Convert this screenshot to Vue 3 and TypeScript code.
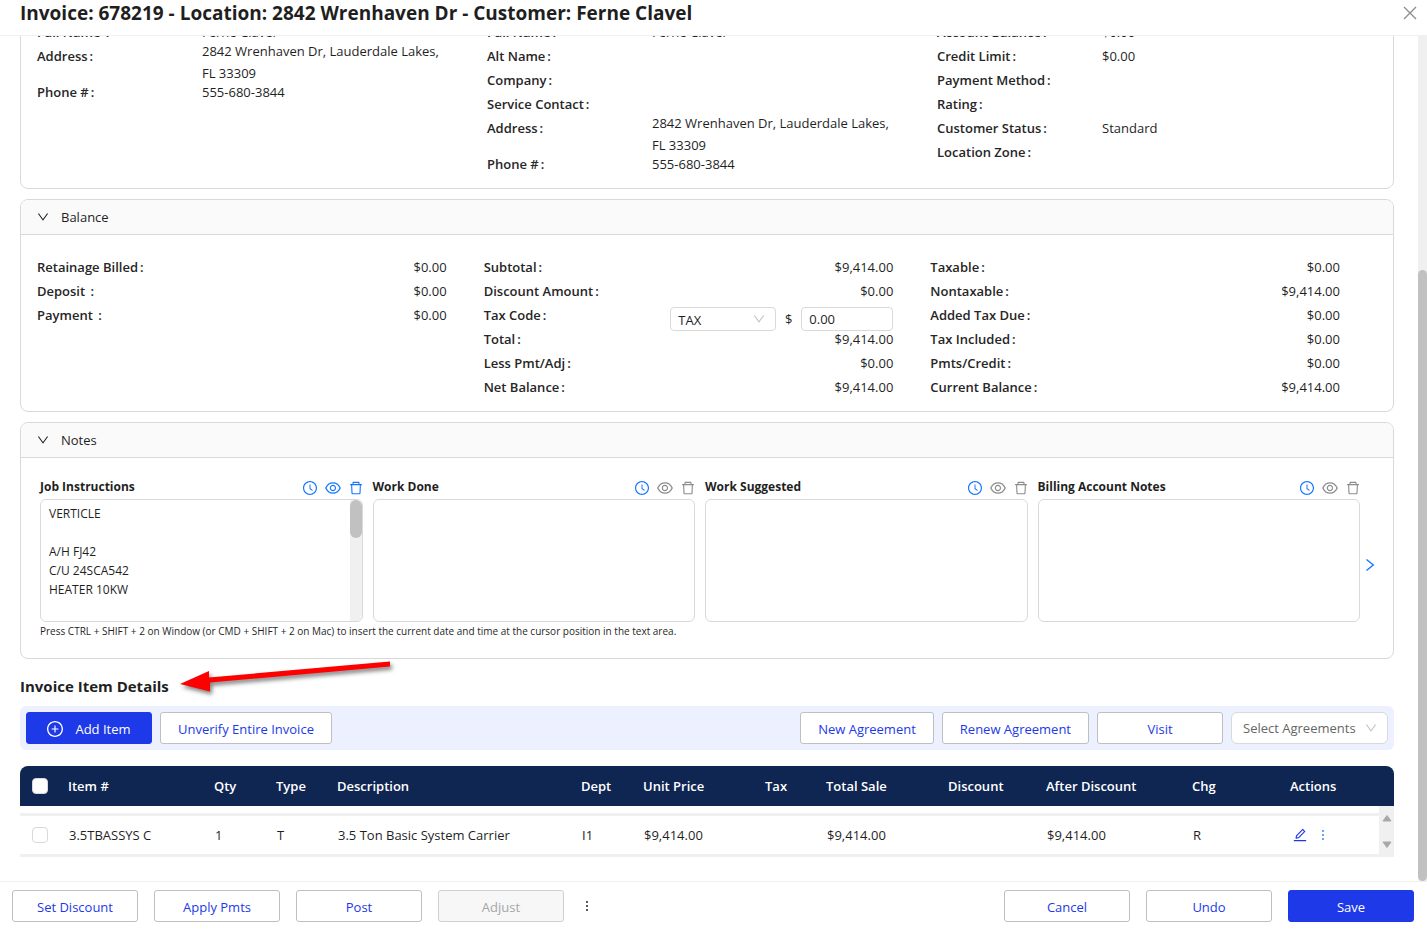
<script setup lang="ts">
import { ref } from 'vue'

interface Field {
  label: string
  value?: string
  tall?: boolean
  tax?: boolean
}

interface Note {
  id: string
  title: string
  text: string
}

const address = '2842 Wrenhaven Dr, Lauderdale Lakes, FL 33309'

const info: Field[][] = [
  [
    { label: 'Full Name ', value: 'Ferne Clavel' },
    { label: 'Address', value: address, tall: true },
    { label: 'Phone #', value: '555-680-3844' },
  ],
  [
    { label: 'Full Name', value: 'Ferne Clavel' },
    { label: 'Alt Name' },
    { label: 'Company' },
    { label: 'Service Contact' },
    { label: 'Address', value: address, tall: true },
    { label: 'Phone #', value: '555-680-3844' },
  ],
  [
    { label: 'Account Balance', value: '$0.00' },
    { label: 'Credit Limit', value: '$0.00' },
    { label: 'Payment Method' },
    { label: 'Rating' },
    { label: 'Customer Status', value: 'Standard' },
    { label: 'Location Zone' },
  ],
]

const balance: Field[][] = [
  [
    { label: 'Retainage Billed', value: '$0.00' },
    { label: 'Deposit ', value: '$0.00' },
    { label: 'Payment ', value: '$0.00' },
  ],
  [
    { label: 'Subtotal', value: '$9,414.00' },
    { label: 'Discount Amount', value: '$0.00' },
    { label: 'Tax Code', tax: true },
    { label: 'Total', value: '$9,414.00' },
    { label: 'Less Pmt/Adj', value: '$0.00' },
    { label: 'Net Balance', value: '$9,414.00' },
  ],
  [
    { label: 'Taxable', value: '$0.00' },
    { label: 'Nontaxable', value: '$9,414.00' },
    { label: 'Added Tax Due', value: '$0.00' },
    { label: 'Tax Included', value: '$0.00' },
    { label: 'Pmts/Credit', value: '$0.00' },
    { label: 'Current Balance', value: '$9,414.00' },
  ],
]

const notes = ref<Note[]>([
  { id: 'job', title: 'Job Instructions', text: 'VERTICLE\n\nA/H FJ42\nC/U 24SCA542\nHEATER 10KW\n' },
  { id: 'done', title: 'Work Done', text: '' },
  { id: 'suggested', title: 'Work Suggested', text: '' },
  { id: 'billing', title: 'Billing Account Notes', text: '' },
])

const taxAmount = ref('0.00')

const columns = [
  { key: 'item', title: 'Item #', value: '3.5TBASSYS C' },
  { key: 'qty', title: 'Qty', value: '1' },
  { key: 'type', title: 'Type', value: 'T' },
  { key: 'desc', title: 'Description', value: '3.5 Ton Basic System Carrier' },
  { key: 'dept', title: 'Dept', value: 'I1' },
  { key: 'price', title: 'Unit Price', value: '$9,414.00' },
  { key: 'tax', title: 'Tax', value: '' },
  { key: 'total', title: 'Total Sale', value: '$9,414.00' },
  { key: 'discount', title: 'Discount', value: '' },
  { key: 'after', title: 'After Discount', value: '$9,414.00' },
  { key: 'chg', title: 'Chg', value: 'R' },
]

const ring =
  'M512 64C264.6 64 64 264.6 64 512s200.6 448 448 448 448-200.6 448-448S759.4 64 512 64zm0 820c-205.4 0-372-166.6-372-372s166.6-372 372-372 372 166.6 372 372-166.6 372-372 372z'

const icons = {
  down: 'M884 256h-75c-5.1 0-9.9 2.5-12.9 6.6L512 654.2 227.9 262.6c-3-4.1-7.8-6.6-12.9-6.6h-75c-6.5 0-10.3 7.4-6.5 12.7l352.6 486.1c12.8 17.6 39 17.6 51.7 0l352.6-486.1c3.9-5.3.1-12.7-6.4-12.7z',
  clock: ring + 'M686.7 638.6L544.1 535.5V288c0-4.4-3.6-8-8-8H488c-4.4 0-8 3.6-8 8v275.4c0 2.6 1.2 5 3.3 6.5l165.4 120.6c3.6 2.6 8.6 1.8 11.2-1.7l28.6-39c2.6-3.7 1.8-8.7-1.8-11.2z',
  eye: 'M942.2 486.2C847.4 286.5 704.1 186 512 186c-192.2 0-335.4 100.5-430.2 300.3a60.3 60.3 0 000 51.5C176.6 737.5 319.9 838 512 838c192.2 0 335.4-100.5 430.2-300.3 7.7-16.2 7.7-35 0-51.5zM512 766c-161.3 0-279.4-81.8-362.7-254C232.6 339.8 350.7 258 512 258c161.3 0 279.4 81.8 362.7 254C791.5 684.2 673.4 766 512 766zm-4-430c-97.2 0-176 78.8-176 176s78.8 176 176 176 176-78.8 176-176-78.8-176-176-176zm0 288c-61.9 0-112-50.1-112-112s50.1-112 112-112 112 50.1 112 112-50.1 112-112 112z',
  trash: 'M360 184h-8c4.4 0 8-3.6 8-8v8h304v-8c0 4.4 3.6 8 8 8h-8v72h72v-80c0-35.3-28.7-64-64-64H352c-35.3 0-64 28.7-64 64v80h72v-72zm504 72H160c-17.7 0-32 14.3-32 32v32c0 4.4 3.6 8 8 8h60.4l24.7 523c1.6 34.1 29.8 61 63.9 61h454c34.2 0 62.3-26.8 63.9-61l24.7-523H888c4.4 0 8-3.6 8-8v-32c0-17.7-14.3-32-32-32zM731.3 840H292.7l-24.2-512h487l-24.2 512z',
  plus: ring + 'M696 480H544V328c0-4.4-3.6-8-8-8h-48c-4.4 0-8 3.6-8 8v152H328c-4.4 0-8 3.6-8 8v48c0 4.4 3.6 8 8 8h152v152c0 4.4 3.6 8 8 8h48c4.4 0 8-3.6 8-8V544h152c4.4 0 8-3.6 8-8v-48c0-4.4-3.6-8-8-8z',
  edit: 'M257.7 752c2 0 4-.2 6-.5L431.9 722c2-.4 3.9-1.3 5.3-2.8l423.9-423.9a9.96 9.96 0 000-14.1L694.9 114.9c-1.9-1.9-4.4-2.9-7.1-2.9s-5.2 1-7.1 2.9L256.8 538.8c-1.5 1.5-2.4 3.3-2.8 5.3l-29.5 168.2a33.5 33.5 0 009.4 29.8c6.6 6.4 14.9 9.9 23.8 9.9zm67.4-174.4L687.8 215l73.3 73.3-362.7 362.6-88.9 15.7 15.6-89zM880 836H144c-17.7 0-32 14.3-32 32v36c0 4.4 3.6 8 8 8h784c4.4 0 8-3.6 8-8v-36c0-17.7-14.3-32-32-32z',
}
</script>

<template>
  <div class="window">
    <header class="titlebar">
      <h1>Invoice: 678219 - Location: 2842 Wrenhaven Dr - Customer: Ferne Clavel</h1>
      <button class="bare close" type="button" aria-label="Close">
        <svg width="14" height="14" viewBox="0 0 14 14"><path d="M1 1l12 12M13 1L1 13" fill="none" stroke="#8c8c8c" stroke-width="1.3" /></svg>
      </button>
    </header>

    <div class="body">
      <main class="viewport">
        <div class="content">
          <section class="card info">
            <dl v-for="(col, i) in info" :key="i" class="fields">
              <div v-for="f in col" :key="f.label" class="field" :class="{ tall: f.tall }">
                <dt>{{ f.label }}<span class="colon">:</span></dt>
                <dd>{{ f.value }}</dd>
              </div>
            </dl>
          </section>

          <section class="card">
            <h2 class="card-head">
              <button class="bare toggle" type="button" aria-expanded="true">
                <svg class="caret" viewBox="64 64 896 896"><path :d="icons.down" /></svg>Balance
              </button>
            </h2>
            <div class="balance">
              <dl v-for="(col, i) in balance" :key="i" class="fields">
                <div v-for="f in col" :key="f.label" class="field">
                  <dt>
                    <label v-if="f.tax" for="tax-code">{{ f.label }}</label><template v-else>{{ f.label }}</template><span class="colon">:</span>
                  </dt>
                  <dd v-if="f.tax" class="tax">
                    <span class="select">
                      <select id="tax-code"><option>TAX</option></select>
                      <svg viewBox="64 64 896 896"><path :d="icons.down" /></svg>
                    </span>
                    <label for="tax-amount">$</label>
                    <input id="tax-amount" v-model="taxAmount" type="text" />
                  </dd>
                  <dd v-else>{{ f.value }}</dd>
                </div>
              </dl>
            </div>
          </section>

          <section class="card">
            <h2 class="card-head">
              <button class="bare toggle" type="button" aria-expanded="true">
                <svg class="caret" viewBox="64 64 896 896"><path :d="icons.down" /></svg>Notes
              </button>
            </h2>
            <div class="notes">
              <div class="notes-main">
                <div class="note-grid">
                  <div v-for="n in notes" :key="n.id" class="note" :class="{ filled: n.text }">
                    <div class="note-head">
                      <label :for="n.id">{{ n.title }}</label>
                      <span class="note-tools">
                        <button class="bare history" type="button" aria-label="History"><svg class="i14" viewBox="64 64 896 896"><path :d="icons.clock" fill-rule="evenodd" /></svg></button>
                        <button class="bare" type="button" aria-label="View"><svg class="i16" viewBox="64 64 896 896"><path :d="icons.eye" /></svg></button>
                        <button class="bare" type="button" aria-label="Delete"><svg class="i14" viewBox="64 64 896 896"><path :d="icons.trash" /></svg></button>
                      </span>
                    </div>
                    <div class="note-box">
                      <textarea :id="n.id" v-model="n.text"></textarea>
                      <div v-if="n.text" class="note-scroll"><div class="note-thumb"></div></div>
                    </div>
                  </div>
                </div>
                <p class="hint">Press CTRL + SHIFT + 2 on Window (or CMD + SHIFT + 2 on Mac) to insert the current date and time at the cursor position in the text area.</p>
              </div>
              <button class="bare next" type="button" aria-label="Next notes">
                <svg width="10" height="14" viewBox="0 0 10 14"><path d="M1.5 1.5L8.3 7l-6.8 5.5" fill="none" stroke="#1677ff" stroke-width="1.4" /></svg>
              </button>
            </div>
          </section>

          <div class="details-title">
            <h2>Invoice Item Details</h2>
            <svg class="pointer" width="224" height="44" viewBox="0 0 224 44" aria-hidden="true">
              <path d="M1 27L30 14V20.500L211 4.500V9.500L31 25.500L31 34.500Z" fill="#ff0000" />
            </svg>
          </div>

          <div class="toolbar">
            <button class="btn primary" type="button"><svg class="i16" viewBox="64 64 896 896"><path :d="icons.plus" fill-rule="evenodd" /></svg>Add Item</button>
            <button class="btn" type="button">Unverify Entire Invoice</button>
            <span class="spacer"></span>
            <button class="btn" type="button">New Agreement</button>
            <button class="btn" type="button">Renew Agreement</button>
            <button class="btn" type="button">Visit</button>
            <span class="select agreements">
              <select aria-label="Select Agreements"><option>Select Agreements</option></select>
              <svg viewBox="64 64 896 896"><path :d="icons.down" /></svg>
            </span>
          </div>

          <table class="items">
            <colgroup>
              <col class="c-check" />
              <col v-for="c in columns" :key="c.key" :class="'c-' + c.key" />
              <col class="c-actions" />
              <col class="c-scroll" />
            </colgroup>
            <thead>
              <tr>
                <th class="check"><input type="checkbox" aria-label="Select all items" /></th>
                <th v-for="c in columns" :key="c.key" scope="col">{{ c.title }}</th>
                <th colspan="2" scope="col">Actions</th>
              </tr>
            </thead>
            <tbody>
              <tr class="gap-row">
                <td colspan="13"></td>
                <td rowspan="2" class="scroll-cell">
                  <div class="arrows">
                    <svg width="10" height="8" viewBox="0 0 10 8"><path d="M1 7L5 1.500L9 7Z" fill="#a8a8a8" stroke="#a8a8a8" stroke-linejoin="round" /></svg>
                    <svg width="10" height="8" viewBox="0 0 10 8"><path d="M1 1L5 6.500L9 1Z" fill="#a8a8a8" stroke="#a8a8a8" stroke-linejoin="round" /></svg>
                  </div>
                </td>
              </tr>
              <tr class="item-row">
                <td class="check"><input type="checkbox" aria-label="Select 3.5TBASSYS C" /></td>
                <td v-for="c in columns" :key="c.key">{{ c.value }}</td>
                <td>
                  <span class="row-actions">
                    <button class="bare edit" type="button" aria-label="Edit item"><svg class="i14" viewBox="64 64 896 896"><path :d="icons.edit" /></svg></button>
                    <button class="bare more" type="button" aria-label="More actions"><svg width="2" height="12" viewBox="0 0 2 12"><path d="M0 1h2v2H0zM0 5h2v2H0zM0 9h2v2H0z" /></svg></button>
                  </span>
                </td>
              </tr>
            </tbody>
          </table>
        </div>
      </main>
      <div class="page-scroll"><div class="page-thumb"></div></div>
    </div>

    <footer class="footer">
      <button class="btn" type="button">Set Discount</button>
      <button class="btn" type="button">Apply Pmts</button>
      <button class="btn" type="button">Post</button>
      <button class="btn" type="button" disabled>Adjust</button>
      <button class="bare kebab" type="button" aria-label="More"><svg width="2" height="12" viewBox="0 0 2 12"><path d="M0 1h2v2H0zM0 5h2v2H0zM0 9h2v2H0z" /></svg></button>
      <span class="spacer"></span>
      <button class="btn" type="button">Cancel</button>
      <button class="btn" type="button">Undo</button>
      <button class="btn primary" type="button">Save</button>
    </footer>
  </div>
</template>

<style>
body {
  margin: 0;
  background: #fff;
}
</style>

<style scoped>
* {
  box-sizing: border-box;
}
.window {
  display: flex;
  flex-direction: column;
  height: 100vh;
  font: 13px/22px "Segoe UI", "Open Sans", "Noto Sans", sans-serif;
  color: #1f1f1f;
}
h1,
h2,
p,
dl,
dd {
  margin: 0;
}
svg {
  display: block;
  fill: currentColor;
}
.i14 {
  width: 14px;
  height: 14px;
}
.i16 {
  width: 16px;
  height: 16px;
}
.bare {
  display: flex;
  align-items: center;
  border: 0;
  padding: 0;
  background: none;
  font: inherit;
  color: inherit;
}
.spacer {
  flex: 1;
}
.titlebar {
  display: flex;
  align-items: center;
  justify-content: space-between;
  padding: 0 10px 9px 20px;
  border-bottom: 1px solid #f0f0f0;
}
h1 {
  font-size: 19px;
  line-height: 26px;
  font-weight: 700;
}
.body {
  flex: 1;
  min-height: 0;
  display: flex;
}
.viewport {
  flex: 1;
  min-width: 0;
  display: flex;
  flex-direction: column;
  justify-content: flex-end;
  overflow: hidden;
  padding: 0 24px 24px 20px;
}
.content {
  flex: none;
}
.page-scroll {
  width: 9px;
  display: flex;
  flex-direction: column;
  justify-content: flex-end;
  background: #f0f0f0;
}
.page-thumb {
  height: 72.3%;
  border-radius: 5px;
  background: #c1c1c1;
}
.card {
  border: 1px solid #d9d9d9;
  border-radius: 8px;
  margin-bottom: 10px;
  overflow: hidden;
}
.card-head {
  padding: 6px 16px;
  border-bottom: 1px solid #d9d9d9;
  background: #fafafa;
  font-size: 13px;
  font-weight: 400;
}
.toggle {
  gap: 12px;
}
.caret {
  width: 12px;
  height: 12px;
}
.info,
.balance {
  display: grid;
  grid-template-columns: repeat(3, 1fr);
}
.info {
  padding: 20px 6px 12px 16px;
}
.balance {
  padding: 20px 16px 12px;
}
.field {
  display: flex;
  height: 24px;
  line-height: 24px;
}
.field.tall {
  height: 36px;
}
dt {
  white-space: pre;
  font-weight: 600;
  color: #262626;
}
.colon {
  margin-left: 2px;
}
.info dt {
  width: 165px;
}
.info dd {
  width: 250px;
}
.tall dd {
  align-self: center;
  line-height: 22px;
}
.balance .field {
  justify-content: space-between;
  padding-right: 37px;
}
.tax {
  display: flex;
  align-items: center;
  height: 24px;
  margin-top: 4px;
}
.tax label {
  width: 25px;
  text-align: center;
}
.tax .select {
  width: 106px;
}
.tax input {
  width: 92px;
  height: 24px;
  padding: 0 7px;
  border: 1px solid #d9d9d9;
  border-radius: 4px;
  font: inherit;
  color: inherit;
}
.select {
  position: relative;
  display: block;
  height: 24px;
}
.select select {
  display: block;
  width: 100%;
  height: 100%;
  padding: 0 7px 2px;
  appearance: none;
  border: 1px solid #d9d9d9;
  border-radius: 4px;
  background: #fff;
  font: inherit;
  color: inherit;
}
.select svg {
  position: absolute;
  right: 11px;
  top: 50%;
  width: 12px;
  height: 12px;
  margin-top: -6px;
  color: #bfbfbf;
  pointer-events: none;
}
.notes {
  display: flex;
  align-items: center;
  padding: 18px 13px 16px 19px;
}
.notes-main {
  flex: 1;
  min-width: 0;
}
.note-grid {
  display: grid;
  grid-template-columns: repeat(4, 1fr);
  gap: 10px;
}
.note-head {
  display: flex;
  justify-content: space-between;
  height: 23px;
  font-size: 12px;
  font-weight: 700;
}
.note-tools {
  display: flex;
  align-items: center;
  gap: 8px;
  color: #8c8c8c;
}
.history,
.filled .note-tools {
  color: #1677ff;
}
.note-box {
  display: flex;
  height: 123px;
  border: 1px solid #d9d9d9;
  border-radius: 6px;
  overflow: hidden;
}
textarea {
  flex: 1;
  min-width: 0;
  padding: 4px 8px;
  border: 0;
  resize: none;
  background: none;
  font: inherit;
  font-size: 12px;
  line-height: 19px;
  color: inherit;
  overflow: hidden;
}
.note-scroll {
  width: 12px;
  background: #f0f0f0;
}
.note-thumb {
  height: 38px;
  border-radius: 6px;
  background: #c1c1c1;
}
.hint {
  margin-bottom: 2px;
  font-size: 10px;
  line-height: 18px;
}
.next {
  width: 20px;
  height: 32px;
  margin-top: 12px;
  justify-content: center;
}
.details-title {
  position: relative;
  margin: 15px 0 8px;
}
.details-title h2 {
  font-size: 15px;
  line-height: 24px;
  font-weight: 700;
}
.pointer {
  position: absolute;
  left: 159px;
  top: -17px;
  filter: drop-shadow(2px 3px 2px rgba(0, 0, 0, 0.5));
}
.toolbar {
  display: flex;
  gap: 8px;
  padding: 6px;
  border-radius: 6px;
  background: #edf0ff;
}
.btn {
  display: flex;
  align-items: center;
  justify-content: center;
  gap: 12px;
  min-width: 126px;
  height: 32px;
  padding: 1px 17px 0;
  border: 1px solid #bfbfbf;
  border-radius: 3px;
  background: #fff;
  font: inherit;
  color: #1d39e8;
}
.btn.primary {
  border-color: #1d39e8;
  background: #1d39e8;
  color: #fff;
}
.btn:disabled {
  border-color: #d0d0d0;
  background: #f7f7f7;
  color: #a6a6a6;
}
.agreements {
  width: 157px;
  height: 32px;
}
.agreements select {
  padding: 0 11px;
  border-radius: 6px;
  color: #666;
}
.items {
  width: 100%;
  margin-top: 16px;
  table-layout: fixed;
  border-collapse: separate;
  border-spacing: 0;
}
th,
td {
  padding: 0 8px;
  text-align: left;
}
th {
  height: 40px;
  background: #0f2552;
  color: #fff;
  font-weight: 600;
}
th:first-child {
  border-radius: 8px 0 0 0;
}
th:last-child {
  border-radius: 0 8px 0 0;
}
.gap-row td {
  height: 10px;
  border-bottom: 3px solid #f0f0f0;
}
.item-row td {
  height: 41px;
  padding-left: 9px;
  border-bottom: 3px solid #f0f0f0;
}
.items .check {
  padding: 0 0 0 12px;
}
.check input {
  display: block;
  appearance: none;
  width: 16px;
  height: 16px;
  margin: 0;
  border: 1px solid #d9d9d9;
  border-radius: 4px;
  background: #fff;
}
.c-check {
  width: 40px;
}
.c-item,
.c-after {
  width: 146px;
}
.c-qty,
.c-dept {
  width: 62px;
}
.c-type,
.c-tax {
  width: 61px;
}
.c-price,
.c-total {
  width: 122px;
}
.c-discount,
.c-chg {
  width: 98px;
}
.c-actions {
  width: 97px;
}
.c-scroll {
  width: 15px;
}
.gap-row .scroll-cell {
  padding: 0;
  border: 0;
  vertical-align: top;
  background: #f0f0f0;
}
.arrows {
  display: flex;
  flex-direction: column;
  align-items: center;
  gap: 19px;
  padding-top: 8px;
}
.row-actions {
  display: flex;
  align-items: center;
  gap: 15px;
  padding-left: 2px;
}
.edit {
  color: #1d39e8;
}
.more {
  color: #69a5f8;
}
.footer {
  display: flex;
  gap: 16px;
  padding: 8px 13px 14px 12px;
  border-top: 1px solid #f0f0f0;
}
.kebab {
  width: 14px;
  justify-content: center;
  color: #595959;
}
</style>
